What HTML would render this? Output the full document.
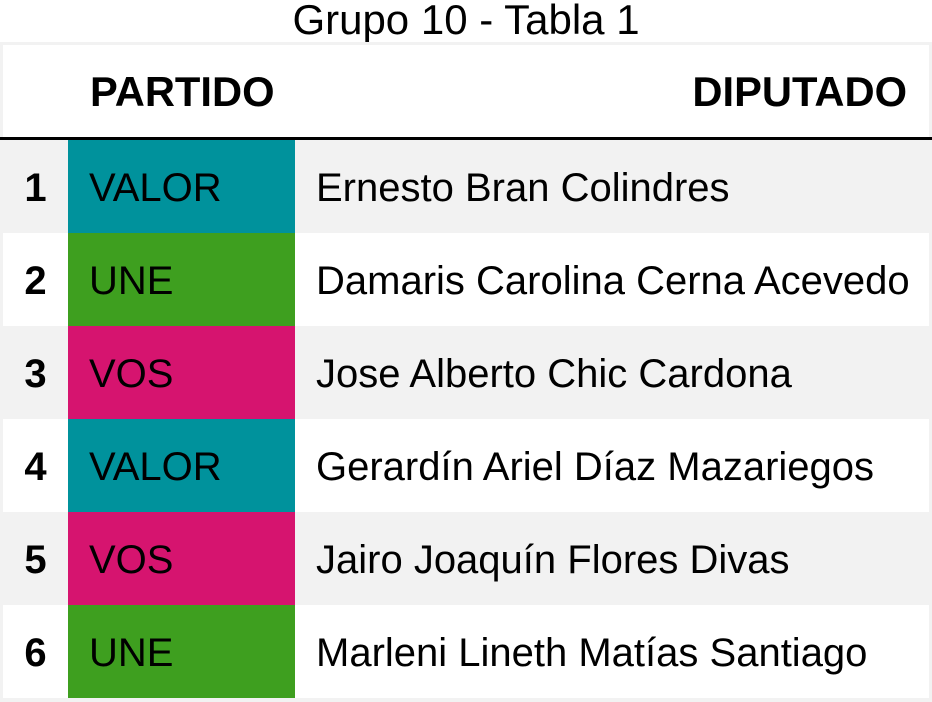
<!DOCTYPE html>
<html><head><meta charset="utf-8"><style>
body{margin:0;width:932px;height:702px;background:#fff;font-family:"Liberation Sans",Arial,sans-serif;overflow:hidden;position:relative}
.title{position:absolute;top:0;left:0;width:932px;text-align:center;font-size:42px;line-height:40px;color:#000}
.frame{position:absolute;left:0;top:42px;width:932px;height:660px;background:#f2f2f2}
.hdr{position:absolute;left:3px;top:45px;width:926px;height:92px;background:#fff}
.hdr span{position:absolute;top:27px;font-weight:bold;font-size:41.7px;line-height:40px}
.line{position:absolute;left:0;top:137px;width:932px;height:3px;background:#000}
.row{position:absolute;left:3px;width:926px;height:93px}
.row .n{position:absolute;left:0;width:65px;text-align:center;font-weight:bold;font-size:40px;line-height:96px}
.row .p{position:absolute;left:65px;width:227px;height:93px;font-size:40px;line-height:96px;padding-left:21px;box-sizing:border-box}
.row .d{position:absolute;left:313px;font-size:40px;line-height:96px;white-space:nowrap}
.g{background:#f2f2f2}.w{background:#fff}
.teal{background:#00929c}.green{background:#3e9f1f}.mag{background:#d6146f}
</style></head><body>
<div class="title">Grupo 10 - Tabla 1</div>
<div class="frame"></div>
<div class="hdr"><span style="left:87px">PARTIDO</span><span style="right:22px">DIPUTADO</span></div>
<div class="line"></div>
<div class="row g" style="top:140px"><div class="n">1</div><div class="p teal">VALOR</div><div class="d">Ernesto Bran Colindres</div></div>
<div class="row w" style="top:233px"><div class="n">2</div><div class="p green">UNE</div><div class="d">Damaris Carolina Cerna Acevedo</div></div>
<div class="row g" style="top:326px"><div class="n">3</div><div class="p mag">VOS</div><div class="d">Jose Alberto Chic Cardona</div></div>
<div class="row w" style="top:419px"><div class="n">4</div><div class="p teal">VALOR</div><div class="d">Gerardín Ariel Díaz Mazariegos</div></div>
<div class="row g" style="top:512px"><div class="n">5</div><div class="p mag">VOS</div><div class="d">Jairo Joaquín Flores Divas</div></div>
<div class="row w" style="top:605px"><div class="n">6</div><div class="p green">UNE</div><div class="d">Marleni Lineth Matías Santiago</div></div>
</body></html>
